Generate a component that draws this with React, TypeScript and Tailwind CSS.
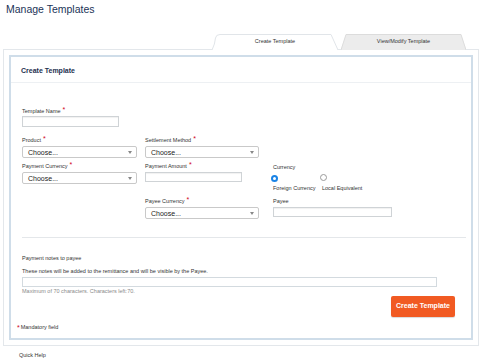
import React from "react";

const Star = () => (
  <span className="relative -top-[1.5px] ml-[2px] text-[7px] leading-none text-[#d0021b]">*</span>
);

const Label = ({ children, req, className = "" }: { children: React.ReactNode; req?: boolean; className?: string }) => (
  <div className={"h-[7px] text-[5.5px] leading-[7px] text-[#333] whitespace-nowrap " + className}>
    {children}
    {req && <Star />}
  </div>
);

const Select = ({ w, className = "" }: { w: string; className?: string }) => (
  <div
    className={
      "flex h-[12px] items-center justify-between rounded-[2px] border border-[#c9c9c9] bg-white pl-[5px] pr-[4px] " +
      w +
      " " +
      className
    }
  >
    <span className="text-[7px] leading-none text-[#222]">Choose...</span>
    <svg width="4" height="3" viewBox="0 0 4 3">
      <path d="M0 0 L4 0 L2 3 Z" fill="#888" />
    </svg>
  </div>
);

const Input = ({ w, h = "h-[10px]", className = "" }: { w: string; h?: string; className?: string }) => (
  <div className={"border border-[#cfd3d6] bg-white shadow-[inset_0_1px_1px_rgba(0,0,0,0.06)] " + w + " " + h + " " + className} />
);

const Tab = ({ active, label, w }: { active?: boolean; label: string; w: number }) => (
  <div className="relative flex h-[15px] items-center justify-center" style={{ width: w }}>
    <svg className="absolute inset-0" width={w} height="16" viewBox={`0 0 ${w} 16`}>
      {active ? (
        <path d={`M0 16 Q3 10 3.5 4 Q4 0.5 8 0.5 L${w - 7} 0.5 L${w} 16`} fill="#fff" stroke="#e1e5e9" strokeWidth="1" />
      ) : (
        <path d={`M0 16 L5 0.5 L${w - 5} 0.5 L${w} 16`} fill="#ececec" stroke="#dcdcdc" strokeWidth="1" />
      )}
    </svg>
    <span className="relative text-[5.5px] leading-none text-[#333]">{label}</span>
  </div>
);

export default function App() {
  return (
    <div className="relative h-[360px] w-[480px] overflow-hidden bg-white font-['Liberation_Sans',Arial,sans-serif]">
      <div className="pl-[6px] pt-[3px] text-[10.5px] leading-[12px] text-[#1b3358]">Manage Templates</div>

      <div className="mt-[19px] flex justify-end gap-[3px] pr-[14px]">
        <Tab active label="Create Template" w={126} />
        <Tab label="View/Modify Template" w={125} />
      </div>

      <div className="ml-[3px] mr-[1px] border border-[#e3e7eb] p-[5px]">
        <div className="border-2 border-[#cfdde9] bg-white">
          <div className="flex h-[26px] items-center border-b border-[#edf0f3] pl-[10px] pt-[4px] text-[7px] font-bold text-[#1d2f4f]">
            Create Template
          </div>

          <div className="pl-[11px] pt-[24px]">
            <Label req>Template Name</Label>
            <Input w="w-[97px]" h="h-[11px]" className="mt-[2px]" />

            <div className="mt-[9px] flex">
              <div className="w-[123px]">
                <Label req>Product</Label>
                <Select w="w-[115px]" className="mt-[3px]" />
                <Label req className="mt-[4px]">Payment Currency</Label>
                <Select w="w-[115px]" className="mt-[3px]" />
              </div>
              <div className="w-[128px]">
                <Label req>Settlement Method</Label>
                <Select w="w-[114px]" className="mt-[3px]" />
                <Label req className="mt-[4px]">Payment Amount</Label>
                <Input w="w-[97px]" className="mt-[3px]" />
                <Label req className="mt-[15px]">Payee Currency</Label>
                <Select w="w-[114px]" className="mt-[3px]" />
              </div>
              <div className="pt-[28px]">
                <Label>Currency</Label>
                <div className="mt-[4px] flex">
                  <div className="w-[49px]">
                    <div className="-ml-[2px] flex h-[7px] w-[7px] items-center justify-center rounded-full bg-[#1a84e6]">
                      <div className="h-[3px] w-[3px] rounded-full bg-white" />
                    </div>
                    <Label className="mt-[3px]">Foreign Currency</Label>
                  </div>
                  <div>
                    <div className="-ml-[2px] -mt-[1px] h-[7px] w-[7px] rounded-full border border-[#9a9a9a] bg-white" />
                    <Label className="mt-[4px]">Local Equivalent</Label>
                  </div>
                </div>
                <Label className="mt-[6px]">Payee</Label>
                <Input w="w-[119px]" className="mt-[2px]" />
              </div>
            </div>

            <div className="mr-[5px] mt-[18px] h-px bg-[#e4e7ea]" />

            <Label className="mt-[17px]">Payment notes to payee</Label>
            <Label className="mt-[6px]">These notes will be added to the remittance and will be visible by the Payee.</Label>
            <div className="mt-[2px] h-[10px] w-[415px] border border-[#d3dadf] bg-white" />
            <div className="mt-[1px] text-[5.5px] leading-[7px] text-[#8a8a8a]">
              Maximum of 70 characters. Characters left:70.
            </div>
          </div>

          <div className="mt-[1px] flex justify-end pr-[16px]">
            <div className="flex h-[21px] w-[64px] items-center justify-center rounded-[2px] bg-[#f15a22] text-[7px] font-bold text-white shadow-[0_1px_1px_rgba(0,0,0,0.15)]">
              Create Template
            </div>
          </div>

          <div className="mt-[7px] flex items-start pb-[7px] pl-[6px]">
            <span className="text-[7px] leading-[7px] text-[#d0021b]">*</span>
            <span className="ml-[1px] text-[5.5px] leading-[7px] text-[#333]">Mandatory field</span>
          </div>
        </div>
      </div>

      <div className="mt-[6px] pl-[19px] text-[5.5px] leading-[7px] text-[#333]">Quick Help</div>
    </div>
  );
}
